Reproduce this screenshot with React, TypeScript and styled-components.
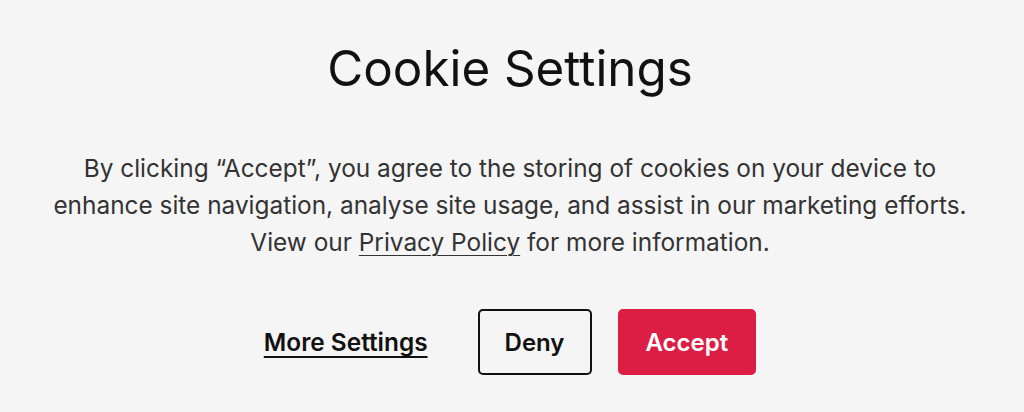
import React from "react";
import styled, { createGlobalStyle } from "styled-components";

const Global = createGlobalStyle`
  html, body { margin: 0; padding: 0; background: #f5f5f5; }
  body { font-family: Inter, "Noto Sans", sans-serif; }
`;

const Page = styled.main`
  width: 1024px;
  height: 412px;
  box-sizing: border-box;
  padding-top: 37px;
  padding-right: 4px;
  display: flex;
  flex-direction: column;
  align-items: center;
  background: #f5f5f5;
`;

const Title = styled.h1`
  margin: 0;
  font-size: 49.3px;
  font-weight: 400;
  line-height: 62px;
  color: #111;
`;

const Text = styled.p`
  margin: 51px 0 0;
  font-size: 24.4px;
  line-height: 37px;
  color: #333;
  text-align: center;
  white-space: nowrap;
`;

const Link = styled.a`
  color: inherit;
  text-decoration: underline;
  text-underline-offset: 4px;
  text-decoration-thickness: 1px;
`;

const Actions = styled.div`
  margin-top: 48px;
  display: flex;
  align-items: center;
  gap: 26px;
`;

const TextButton = styled.button`
  background: none;
  border: none;
  padding: 0;
  margin-right: 24px;
  font-family: inherit;
  font-size: 24.4px;
  font-weight: 600;
  color: #111;
  text-decoration: underline;
  text-underline-offset: 5px;
  text-decoration-thickness: 2px;
  cursor: pointer;
`;

const Button = styled.button<{ $primary?: boolean }>`
  height: 66px;
  padding: 0 ${(p) => (p.$primary ? "26px" : "25px")};
  box-sizing: border-box;
  border-radius: 5px;
  font-family: inherit;
  font-size: 24px;
  font-weight: 600;
  cursor: pointer;
  border: 2px solid ${(p) => (p.$primary ? "#dc1e45" : "#111")};
  background: ${(p) => (p.$primary ? "#dc1e45" : "transparent")};
  color: ${(p) => (p.$primary ? "#fff" : "#111")};
`;

export default function App() {
  return (
    <>
      <Global />
      <Page>
        <Title>Cookie Settings</Title>
        <Text>
          By clicking “Accept”, you agree to the storing of cookies on your device to
          <br />
          enhance site navigation, analyse site usage, and assist in our marketing efforts.
          <br />
          View our <Link href="#">Privacy Policy</Link> for more information.
        </Text>
        <Actions>
          <TextButton>More Settings</TextButton>
          <Button>Deny</Button>
          <Button $primary>Accept</Button>
        </Actions>
      </Page>
    </>
  );
}
